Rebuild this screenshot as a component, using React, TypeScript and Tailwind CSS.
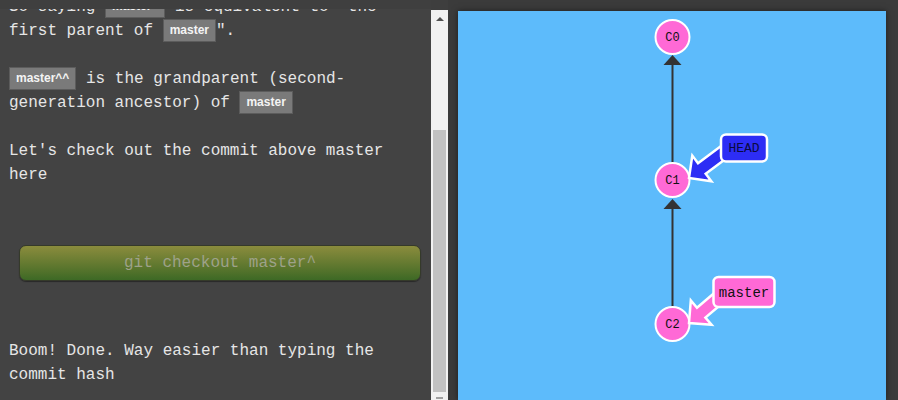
import React from "react";

const mono = { fontFamily: '"Liberation Mono", "DejaVu Sans Mono", monospace' };

function Badge({ children }: { children: React.ReactNode }) {
  return (
    <span
      className="inline-block align-middle px-[6px] leading-[21px] text-[12px] font-bold text-[#f4f4f4] bg-[#7a7a7a] border border-[#5c5c5c]"
      style={{ fontFamily: '"Liberation Sans", Arial, sans-serif' }}
    >
      {children}
    </span>
  );
}

function arrowPoints(sx: number, sy: number, tx: number, ty: number, shaft: number, head: number, len: number) {
  const dx = tx - sx;
  const dy = ty - sy;
  const l = Math.hypot(dx, dy);
  const ux = dx / l;
  const uy = dy / l;
  const nx = -uy;
  const ny = ux;
  const bx = tx - ux * len;
  const by = ty - uy * len;
  const pts = [
    [sx + nx * shaft, sy + ny * shaft],
    [bx + nx * shaft, by + ny * shaft],
    [bx + nx * head, by + ny * head],
    [tx, ty],
    [bx - nx * head, by - ny * head],
    [bx - nx * shaft, by - ny * shaft],
    [sx - nx * shaft, sy - ny * shaft],
  ];
  return pts.map((p) => `${p[0].toFixed(1)},${p[1].toFixed(1)}`).join(" ");
}

function Graph() {
  const pink = "#ff69d6";
  return (
    <svg viewBox="458 11 428 389" width="428" height="389" className="block">
      {/* edges */}
      <line x1="672.5" y1="163" x2="672.5" y2="62" stroke="#333" strokeWidth="2" />
      <polygon points="663.5,65 681.5,65 672.5,55" fill="#333" />
      <line x1="672.5" y1="307" x2="672.5" y2="206" stroke="#333" strokeWidth="2" />
      <polygon points="663.5,209 681.5,209 672.5,199" fill="#333" />

      {/* commits */}
      {[
        ["C0", 37],
        ["C1", 180],
        ["C2", 324],
      ].map(([label, cy]) => (
        <g key={label as string}>
          <circle cx="672.5" cy={cy as number} r="17" fill={pink} stroke="#fff" strokeWidth="2" />
          <text
            x="672.5"
            y={(cy as number) + 4}
            textAnchor="middle"
            fontSize="12"
            fill="#111"
            style={mono}
          >
            {label}
          </text>
        </g>
      ))}

      {/* HEAD */}
      <polygon
        points={arrowPoints(728, 149, 689, 178, 6.5, 16, 16)}
        fill="#2d2df5"
        stroke="#fff"
        strokeWidth="2.5"
        strokeLinejoin="miter"
      />
      <rect x="721" y="134.5" width="46" height="27" rx="5" fill="#2d2df5" stroke="#fff" strokeWidth="2.5" />
      <text x="744" y="152" textAnchor="middle" fontSize="13" fill="#0a0a40" style={mono}>
        HEAD
      </text>

      {/* master */}
      <polygon
        points={arrowPoints(722, 295, 689, 323, 6.5, 16, 16)}
        fill={pink}
        stroke="#fff"
        strokeWidth="2.5"
        strokeLinejoin="miter"
      />
      <rect x="713.5" y="277" width="61" height="30" rx="5" fill={pink} stroke="#fff" strokeWidth="2.5" />
      <text x="744" y="296.5" textAnchor="middle" fontSize="14" fill="#111" style={mono}>
        master
      </text>
    </svg>
  );
}

export default function App() {
  return (
    <div className="w-[898px] h-[400px] flex overflow-hidden bg-[#434343]">
      {/* left text panel */}
      <div className="relative w-[431px] h-[400px] overflow-hidden shrink-0">
        <div className="pl-[9px] mt-[-5px] text-[16px] leading-[24px] text-[#e6e6e6]" style={mono}>
          <p className="whitespace-nowrap">
            So saying <Badge>master^</Badge> is equivalent to "the
            <br />
            first parent of <Badge>master</Badge>".
          </p>
          <p className="mt-[24px] whitespace-nowrap">
            <Badge>master^^</Badge> is the grandparent (second-
            <br />
            generation ancestor) of <Badge>master</Badge>
          </p>
          <p className="mt-[24px] whitespace-nowrap">
            Let's check out the commit above master
            <br />
            here
          </p>
          <div className="mt-[58px] ml-[10px] mr-[10px]">
            <div className="h-[36px] rounded-[7px] border border-[#353a2a] bg-gradient-to-b from-[#8b8c3d] to-[#3d6925] flex items-center justify-center text-[16px] text-[#9ea28a] shadow-[0_1px_1px_rgba(0,0,0,0.4)]">
              git checkout master^
            </div>
          </div>
          <p className="mt-[58px] whitespace-nowrap">
            Boom! Done. Way easier than typing the
            <br />
            commit hash
          </p>
        </div>
        {/* top band covering the scrolled-off line */}
        <div className="absolute top-0 left-0 right-0 h-[9px] bg-[#3f3f3f]" />
      </div>

      {/* fake scrollbar */}
      <div className="w-[17px] shrink-0 h-[400px] flex flex-col bg-[#3e3e3e]">
        <div className="mt-[10px] flex-1 bg-[#f1f1f1] flex flex-col items-center">
          <div className="h-[17px] w-full flex items-center justify-center">
            <div className="w-0 h-0 border-l-[4px] border-r-[4px] border-b-[4px] border-l-transparent border-r-transparent border-b-[#505050]" />
          </div>
          <div className="mt-[103px] w-[13px] h-[262px] bg-[#c1c1c1]" />
          <div className="mt-[5px] w-[7px] h-[2px] bg-[#a0a0a0]" />
        </div>
      </div>

      {/* right visualization */}
      <div className="flex-1 h-[400px] bg-[#3b3b3b] pt-[11px] pl-[10px] pr-[12px] flex">
        <div className="flex-1 bg-[#5dbbfb] shadow-[0_0_6px_rgba(0,0,0,0.5)] overflow-hidden">
          <Graph />
        </div>
      </div>
    </div>
  );
}
